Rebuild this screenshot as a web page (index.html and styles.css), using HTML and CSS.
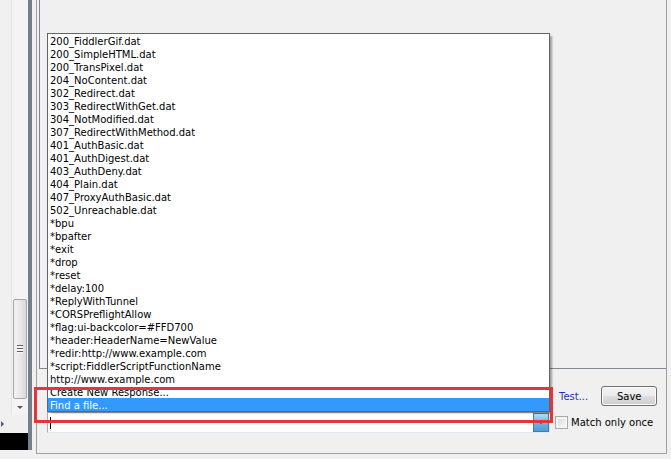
FILE: index.html
```html
<!DOCTYPE html>
<html lang="en">
<head>
    <meta charset="UTF-8">
    <title>AutoResponder Rule Editor</title>
    <link rel="stylesheet" href="styles.css">
</head>
<body>
    <div class="sidebar">
        <div class="vscroll">
            <div class="vscroll-track"></div>
            <div class="vscroll-thumb"><span class="grip"></span></div>
            <div class="vscroll-down"><span class="arrow-down"></span></div>
        </div>
        <div class="hscroll"><span class="arrow-right"></span></div>
        <div class="black-box"></div>
    </div>
    <div class="splitter"></div>

    <div class="panel">
        <div class="editor"></div>

        <div class="controls">
            <div class="combo-wrap">
                <ul class="popup">
                    <li>200_FiddlerGif.dat</li>
                    <li>200_SimpleHTML.dat</li>
                    <li>200_TransPixel.dat</li>
                    <li>204_NoContent.dat</li>
                    <li>302_Redirect.dat</li>
                    <li>303_RedirectWithGet.dat</li>
                    <li>304_NotModified.dat</li>
                    <li>307_RedirectWithMethod.dat</li>
                    <li>401_AuthBasic.dat</li>
                    <li>401_AuthDigest.dat</li>
                    <li>403_AuthDeny.dat</li>
                    <li>404_Plain.dat</li>
                    <li>407_ProxyAuthBasic.dat</li>
                    <li>502_Unreachable.dat</li>
                    <li>*bpu</li>
                    <li>*bpafter</li>
                    <li>*exit</li>
                    <li>*drop</li>
                    <li>*reset</li>
                    <li>*delay:100</li>
                    <li>*ReplyWithTunnel</li>
                    <li>*CORSPreflightAllow</li>
                    <li>*flag:ui-backcolor=#FFD700</li>
                    <li>*header:HeaderName=NewValue</li>
                    <li>*redir:http://www.example.com</li>
                    <li>*script:FiddlerScriptFunctionName</li>
                    <li>http://www.example.com</li>
                    <li>Create New Response...</li>
                    <li class="selected">Find a file...</li>
                </ul>
                <div class="combo">
                    <span class="caret"></span>
                    <span class="combo-btn"><span class="arrow-down small"></span></span>
                </div>
                <div class="highlight-box"></div>
            </div>

            <div class="actions">
                <div class="action-row">
                    <a class="test-link">Test...</a>
                    <button class="save-btn">Save</button>
                </div>
                <label class="check-row"><span class="checkbox"></span>Match only once</label>
            </div>
        </div>
    </div>
</body>
</html>
```

FILE: styles.css
```css
body {
    margin: 0;
    width: 671px;
    height: 459px;
    overflow: hidden;
    display: flex;
    align-items: flex-start;
    background-color: #f0f0f0;
    font-family: "DejaVu Sans", Verdana, sans-serif;
    font-size: 10px;
    color: #000;
}

/* left strip with the scrollbar of the rules list */
.sidebar {
    width: 28px;
    height: 450px;
    display: flex;
    flex-direction: column;
}

.vscroll {
    margin-left: 11px;
    width: 17px;
    height: 415px;
    display: flex;
    flex-direction: column;
    background-color: #f4f4f4;
    border-left: 1px solid #e4e4e4;
    box-sizing: border-box;
}

.vscroll-track {
    flex: 1;
}

.vscroll-thumb {
    height: 98px;
    margin: 0 1px;
    border: 1px solid #a5a5a5;
    border-radius: 2px;
    background: linear-gradient(to right, #f3f3f3, #e6e6e6 60%, #d8d8d8);
    display: flex;
    align-items: center;
    justify-content: center;
}

.grip {
    width: 6px;
    height: 8px;
    background: repeating-linear-gradient(to bottom, #5c5c5c 0, #5c5c5c 1px, #f8f8f8 1px, #f8f8f8 3px);
}

.vscroll-down {
    height: 16px;
    display: flex;
    align-items: center;
    justify-content: center;
}

.arrow-down {
    width: 0;
    height: 0;
    border-left: 3px solid transparent;
    border-right: 3px solid transparent;
    border-top: 3px solid #4d5a6a;
}

.hscroll {
    height: 18px;
    display: flex;
    align-items: center;
}

.arrow-right {
    margin-left: 1px;
    width: 0;
    height: 0;
    border-top: 3px solid transparent;
    border-bottom: 3px solid transparent;
    border-left: 3px solid #4d5a6a;
}

.black-box {
    height: 17px;
    background-color: #000;
}

.splitter {
    width: 4px;
    height: 450px;
    background-color: #737f8a;
    margin-right: 4px;
}

/* rule editor panel */
.panel {
    width: 631px;
    height: 454px;
    box-sizing: border-box;
    border: 1px solid #a0a0a0;
    border-top: none;
    padding-left: 2px;
    display: flex;
    flex-direction: column;
}

.editor {
    height: 369px;
    box-sizing: border-box;
    border-left: 1px solid #828790;
    border-bottom: 1px solid #828790;
    background-color: #f0f0f0;
}

.controls {
    height: 84px;
    box-sizing: border-box;
    padding-left: 8px;
    padding-bottom: 20px;
    display: flex;
    align-items: flex-end;
}

.combo-wrap {
    position: relative;
    width: 503px;
}

.combo {
    height: 21px;
    box-sizing: border-box;
    border: 1px solid #abadb3;
    border-right-color: #dbdfe6;
    border-bottom-color: #e3e9ef;
    background-color: #fff;
    display: flex;
    align-items: center;
}

.caret {
    margin-left: 2px;
    width: 1px;
    height: 12px;
    background-color: #000;
}

.combo-btn {
    margin-left: auto;
    width: 16px;
    height: 19px;
    box-sizing: border-box;
    border: 1px solid #3c7fb1;
    background: linear-gradient(#b7dcf5, #71b5e2 50%, #4f9bd3);
    display: flex;
    align-items: center;
    justify-content: center;
}

.arrow-down.small {
    border-top-color: #1c2a3c;
}

/* dropdown list, opened upward over the editor */
.popup {
    position: absolute;
    left: 0;
    bottom: 100%;
    width: 503px;
    margin: 0;
    padding: 0;
    list-style: none;
    box-sizing: border-box;
    border: 1px solid #646464;
    background-color: #fff;
    box-shadow: 3px 2px 2px -1px rgba(0, 0, 0, 0.35);
}

.popup li {
    height: 13px;
    line-height: 15px;
    padding-left: 2px;
    white-space: nowrap;
}

.popup li.selected {
    background-color: #3399ff;
    color: #fff;
}

/* red annotation round the last entries */
.highlight-box {
    position: absolute;
    left: -13px;
    top: -25px;
    width: 519px;
    height: 36px;
    box-sizing: border-box;
    border: 3px solid #e4343c;
}

.actions {
    display: flex;
    flex-direction: column;
}

.action-row {
    height: 20px;
    margin-bottom: 6px;
    display: flex;
    align-items: center;
}

.test-link {
    margin-left: 9px;
    color: #2233b5;
    cursor: pointer;
}

.save-btn {
    margin-left: 13px;
    width: 56px;
    height: 20px;
    padding: 0;
    border: 1px solid #707070;
    border-radius: 3px;
    background: linear-gradient(#f2f2f2, #ebebeb 50%, #dddddd 50%, #cfcfcf);
    box-shadow: inset 0 0 0 1px #fcfcfc;
    font-family: inherit;
    font-size: 10px;
    color: #000;
}

.check-row {
    height: 21px;
    display: flex;
    align-items: center;
}

.checkbox {
    margin-left: 5px;
    margin-right: 3px;
    width: 13px;
    height: 13px;
    box-sizing: border-box;
    border: 1px solid #a9a9a9;
    background: linear-gradient(135deg, #d6d6d6, #fafafa);
    box-shadow: inset 0 0 0 2px #f4f4f4;
}
```
